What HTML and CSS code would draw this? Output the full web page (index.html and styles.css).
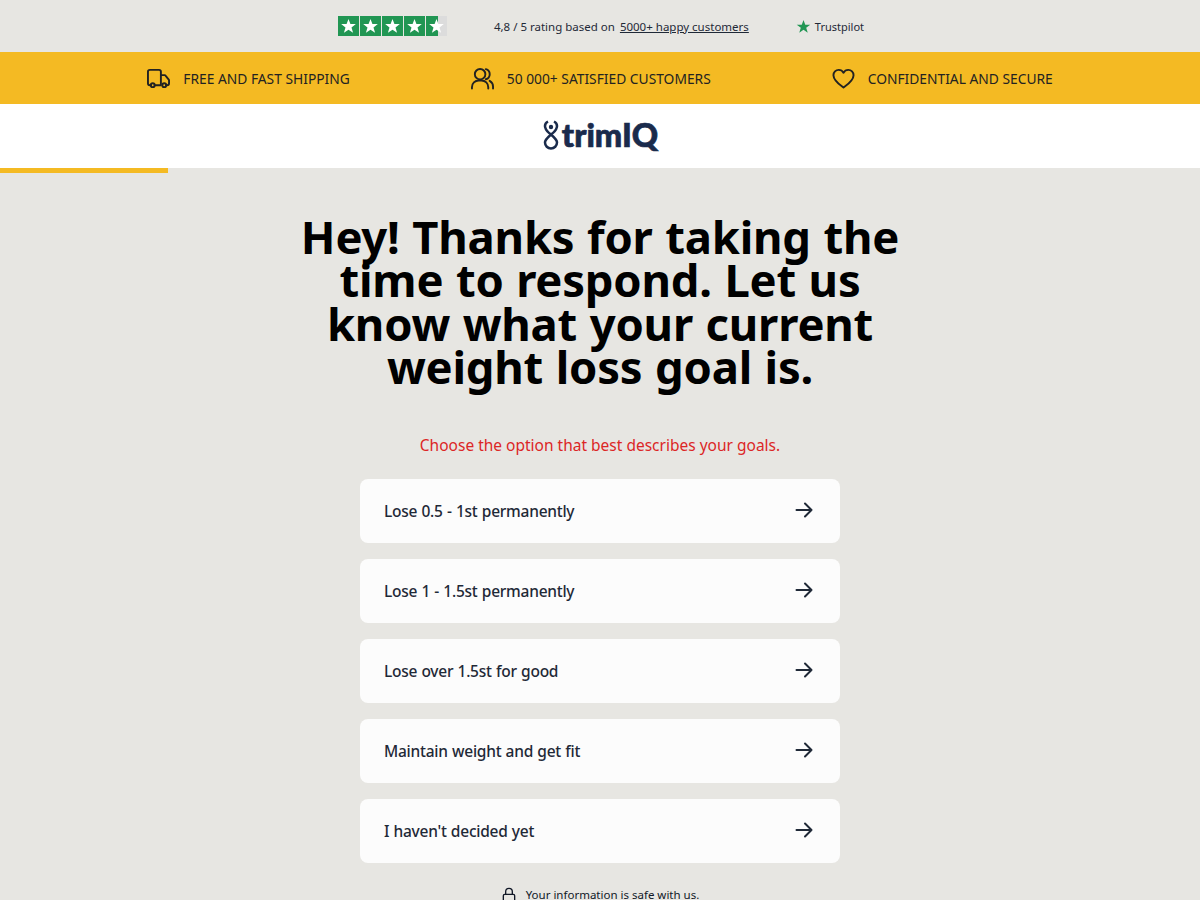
FILE: index.html
```html
<!DOCTYPE html>
<html>
<head>
    <meta charset="utf-8">
    <title>trimIQ</title>
    <link rel="stylesheet" href="styles.css">
</head>
<body>
    <div class="rating">
        <div class="stars">
            <span class="star"><svg viewBox="0 0 24 24"><path d="M12 3.500l2.300 6.200h6.500l-5.200 4 1.900 6.500L12 16.400l-5.500 3.800 1.900-6.500-5.200-4h6.500z"/></svg></span>
            <span class="star"><svg viewBox="0 0 24 24"><path d="M12 3.500l2.300 6.200h6.500l-5.200 4 1.900 6.500L12 16.400l-5.500 3.800 1.900-6.500-5.200-4h6.500z"/></svg></span>
            <span class="star"><svg viewBox="0 0 24 24"><path d="M12 3.500l2.300 6.200h6.500l-5.200 4 1.900 6.500L12 16.400l-5.500 3.800 1.900-6.500-5.200-4h6.500z"/></svg></span>
            <span class="star"><svg viewBox="0 0 24 24"><path d="M12 3.500l2.300 6.200h6.500l-5.200 4 1.900 6.500L12 16.400l-5.500 3.800 1.900-6.500-5.200-4h6.500z"/></svg></span>
            <span class="star half"><svg viewBox="0 0 24 24"><path d="M12 3.500l2.300 6.200h6.500l-5.200 4 1.900 6.500L12 16.400l-5.500 3.800 1.900-6.500-5.200-4h6.500z"/></svg></span>
        </div>
        <div class="rating-text">4,8 / 5 rating based on <a href="#">5000+ happy customers</a></div>
        <div class="tp"><svg viewBox="0 0 24 24"><path d="M12 1.500l2.800 7.700h8l-6.500 4.900 2.500 8-6.800-5-6.800 5 2.500-8-6.500-4.900h8z"/></svg>Trustpilot</div>
    </div>

    <div class="usp">
        <div class="usp-item">
            <svg viewBox="0 0 24 24"><path d="M4 19H3a2 2 0 0 1-2-2V5a2 2 0 0 1 2-2h9.500a2 2 0 0 1 2 2v14M8 19h6.500M14.500 8.500h4a1 1 0 0 1 .8.400l3.400 4.200a1.500 1.500 0 0 1 .3.900v3a2 2 0 0 1-2 2H20"/><circle cx="6" cy="19" r="2"/><circle cx="18" cy="19" r="2"/></svg>
            FREE AND FAST SHIPPING
        </div>
        <div class="usp-item">
            <svg viewBox="0 0 24 24"><circle cx="9.500" cy="7.500" r="5.500"/><path d="M1 22.500v-1.500a7 7 0 0 1 7-7h3a7 7 0 0 1 7 7v1.500M15.500 2.200a5.500 5.500 0 0 1 0 10.600M19.500 14.400a7 7 0 0 1 3.500 6.100v2"/></svg>
            50 000+ SATISFIED CUSTOMERS
        </div>
        <div class="usp-item">
            <svg viewBox="0 0 24 24"><path d="M12 21.500C8 18.500 1.500 14 1.500 8.500A5.500 5.500 0 0 1 7 3c2.200 0 3.900 1 5 3 1.100-2 2.800-3 5-3a5.500 5.500 0 0 1 5.500 5.500c0 5.500-6.500 10-10.500 13z"/></svg>
            CONFIDENTIAL AND SECURE
        </div>
    </div>

    <div class="logo-bar">
        <div class="logo">
            <svg viewBox="0 0 16 30"><path d="M5 1.500C0 4 1.500 10 8 14.500C12 18 14 20 14 22.500A6 6 0 0 1 2 22.500C2 20 4 18 8 14.500C14.500 10 16 4 11 1.500"/><circle class="dot" cx="8" cy="7" r="2.200"/></svg>
            <span>trimIQ</span>
        </div>
    </div>

    <div class="progress"><div class="progress-fill"></div></div>

    <main class="quiz">
        <h1>Hey! Thanks for taking the time to respond. Let us know what your current weight loss goal is.</h1>
        <p class="hint">Choose the option that best describes your goals.</p>
        <div class="options">
            <a class="option" href="#">Lose 0.5 - 1st permanently<svg viewBox="0 0 24 24"><path d="M4.500 12h15M13 5.500l6.500 6.500-6.500 6.500"/></svg></a>
            <a class="option" href="#">Lose 1 - 1.5st permanently<svg viewBox="0 0 24 24"><path d="M4.500 12h15M13 5.500l6.500 6.500-6.500 6.500"/></svg></a>
            <a class="option" href="#">Lose over 1.5st for good<svg viewBox="0 0 24 24"><path d="M4.500 12h15M13 5.500l6.500 6.500-6.500 6.500"/></svg></a>
            <a class="option" href="#">Maintain weight and get fit<svg viewBox="0 0 24 24"><path d="M4.500 12h15M13 5.500l6.500 6.500-6.500 6.500"/></svg></a>
            <a class="option" href="#">I haven't decided yet<svg viewBox="0 0 24 24"><path d="M4.500 12h15M13 5.500l6.500 6.500-6.500 6.500"/></svg></a>
        </div>
        <div class="safe">
            <svg viewBox="0 0 24 24"><rect x="3.500" y="11" width="17" height="11" rx="2"/><path d="M7 11V7a5 5 0 0 1 10 0v4"/></svg>
            Your information is safe with us.
        </div>
    </main>
</body>
</html>
```

FILE: styles.css
```css
html, body
{
margin: 0;
padding: 0;
}
body
{
height: 900px;
overflow: hidden;
background: #e7e6e2;
font-family: "Noto Sans", "Open Sans", sans-serif;
color: #111827;
}
a
{
color: inherit;
}
.rating
{
height: 52px;
display: flex;
align-items: center;
justify-content: center;
font-size: 11.5px;
color: #1f2937;
}
.stars
{
display: flex;
gap: 1px;
margin-left: 2px;
margin-right: 47px;
}
.star
{
width: 21px;
height: 20px;
background: #219653;
display: block;
}
.star svg
{
display: block;
width: 21px;
height: 20px;
fill: #fff;
}
.star.half
{
background: linear-gradient(90deg, #219653 55%, #dcdcdc 55%);
}
.rating-text
{
margin-right: 47px;
}
.rating-text a
{
margin-left: 2px;
}
.tp
{
display: flex;
align-items: center;
gap: 4px;
font-size: 11px;
}
.tp svg
{
width: 15px;
height: 15px;
fill: #219653;
}
.usp
{
height: 52px;
background: #f4ba23;
display: flex;
align-items: center;
justify-content: center;
gap: 121px;
font-size: 13.8px;
color: #222;
}
.usp-item
{
display: flex;
align-items: center;
gap: 13px;
}
.usp-item svg
{
width: 23px;
height: 23px;
fill: none;
stroke: #222;
stroke-width: 2;
stroke-linecap: round;
stroke-linejoin: round;
}
.logo-bar
{
height: 64px;
background: #fff;
display: flex;
align-items: center;
justify-content: center;
}
.logo
{
display: flex;
align-items: center;
gap: 3px;
margin-top: -2px;
margin-left: 1px;
color: #1a2b4c;
font-family: "Lato", sans-serif;
font-size: 32.5px;
font-weight: 900;
line-height: 40px;
-webkit-text-stroke: 0.7px #1a2b4c;
}
.logo svg
{
width: 16px;
height: 30px;
fill: none;
stroke: #1a2b4c;
stroke-width: 2.5;
}
.logo svg .dot
{
fill: #1a2b4c;
stroke: none;
}
.progress
{
height: 5px;
}
.progress-fill
{
width: 14%;
height: 5px;
background: #f4ba23;
}
.quiz
{
display: flex;
flex-direction: column;
align-items: center;
}
h1
{
width: 640px;
margin: 42px 0 0 0;
font-size: 45.4px;
line-height: 43.4px;
font-weight: 700;
letter-spacing: -0.2px;
word-spacing: 1px;
text-align: center;
color: #000;
}
.hint
{
margin: 44px 0 0 0;
font-size: 15.5px;
line-height: 24px;
color: #dc2626;
}
.options
{
width: 480px;
margin-top: 22px;
display: flex;
flex-direction: column;
gap: 16px;
}
.option
{
height: 64px;
box-sizing: border-box;
padding: 0 24px;
display: flex;
align-items: center;
justify-content: space-between;
background: #fcfcfc;
border-radius: 8px;
font-size: 15.5px;
font-weight: 500;
letter-spacing: -0.25px;
word-spacing: 0.5px;
color: #1f2937;
text-decoration: none;
}
.option svg
{
width: 24px;
height: 24px;
margin-bottom: 1px;
fill: none;
stroke: #1f2937;
stroke-width: 2;
stroke-linecap: round;
stroke-linejoin: round;
}
.safe
{
margin-top: 24px;
display: flex;
align-items: center;
gap: 9px;
font-size: 11.5px;
}
.safe svg
{
width: 16px;
height: 16px;
fill: none;
stroke: #111827;
stroke-width: 2;
}
```
